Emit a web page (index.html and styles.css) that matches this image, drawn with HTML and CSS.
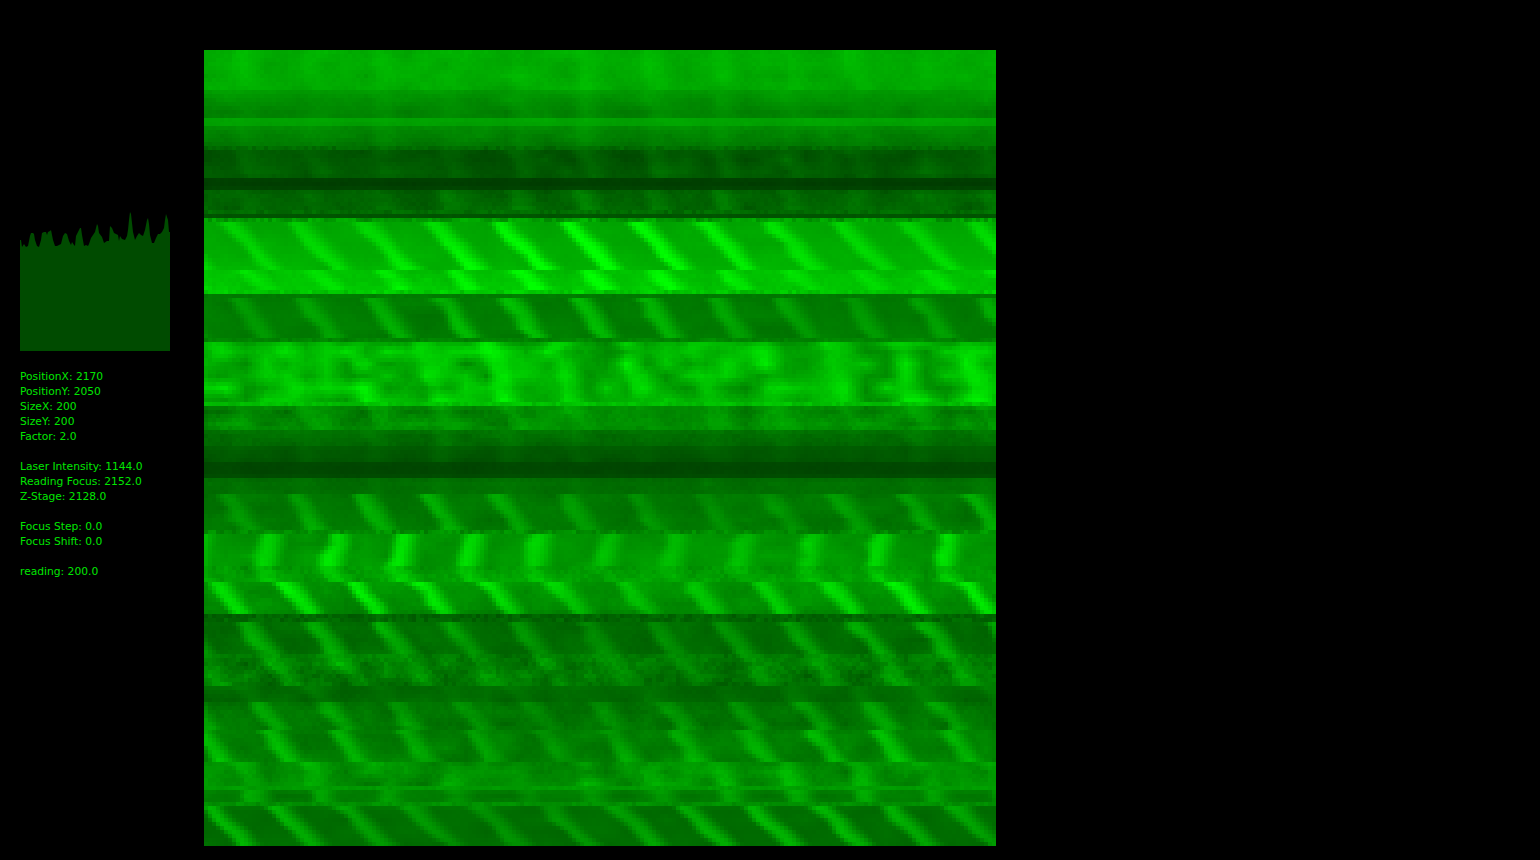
FILE: index.html
```html
<!DOCTYPE html>
<html lang="en">
<head>
    <meta charset="UTF-8">
    <title>Scan Viewer</title>
    <link rel="stylesheet" href="styles.css">
</head>
<body>
    <aside class="sidebar">
        <svg class="histogram" width="150" height="140" viewBox="20 212 150 140">
            <polygon fill="#004b00" points="20,351 20,240 21,240 22,247 24,244 26,247 28,246 30,236 31,233 33,233 34,234 35,240 37,246 39,247 41,240 42,233 44,232 46,232 47,235 48,232 50,231 51,230 53,240 55,246 57,246 59,245 61,244 63,236 65,233 67,234 69,241 71,245 72,242 74,245 75,246 76,236 78,232 80,228 81,228 82,235 84,246 86,245 88,246 89,244 91,238 93,235 95,232 97,224 98,226 99,233 102,237 104,243 107,241 109,241 110,226 112,228 114,233 118,235 119,241 120,236 122,239 125,240 127,236 128,230 129,220 130,212 131,214 133,232 135,240 137,236 139,233 141,235 143,236 145,230 147,220 148,218 149,224 150,235 152,243 154,243 156,238 158,234 160,234 162,232 164,228 165,220 166,214 168,220 169,232 170,232 170,351"/>
        </svg>

        <div class="readout">
            <div class="readout-group">
                <div>PositionX: 2170</div>
                <div>PositionY: 2050</div>
                <div>SizeX: 200</div>
                <div>SizeY: 200</div>
                <div>Factor: 2.0</div>
            </div>
            <div class="readout-group">
                <div>Laser Intensity: 1144.0</div>
                <div>Reading Focus: 2152.0</div>
                <div>Z-Stage: 2128.0</div>
            </div>
            <div class="readout-group">
                <div>Focus Step: 0.0</div>
                <div>Focus Shift: 0.0</div>
            </div>
            <div class="readout-group">
                <div>reading: 200.0</div>
            </div>
        </div>
    </aside>

    <canvas id="scan" class="scan" width="198" height="199"></canvas>

    <script src="app.js"></script>
</body>
</html>
```

FILE: styles.css
```css
html, body {
    margin: 0;
    padding: 0;
    height: 100%;
    background-color: #000;
    overflow: hidden;
}

body {
    display: flex;
    align-items: flex-start;
    padding-top: 50px;
    box-sizing: border-box;
    font-family: "DejaVu Sans", sans-serif;
}

.sidebar {
    width: 204px;
    flex-shrink: 0;
    padding: 162px 0 0 20px;
    box-sizing: border-box;
}

.histogram {
    display: block;
}

.readout {
    margin-top: 17px;
    color: #00e600;
    font-size: 10.7px;
    line-height: 15px;
    white-space: nowrap;
}

.readout-group {
    margin-bottom: 15px;
}

.scan {
    display: block;
    width: 792px;
    height: 796px;
    flex-shrink: 0;
    image-rendering: pixelated;
}
```

FILE: app.js
```js
// bands of the scan, in page pixels
// [top, bottom, green at top, green at bottom, streak amount, noise, slope, x of a streak at top, blob]
const bands = [
    [50, 90, 172, 168, 12, 6, 0.2, 240, 10],
    [90, 118, 150, 124, 8, 5, 0.2, 240, 8],
    [118, 126, 168, 160, 2, 4, 0, 240, 6],
    [126, 146, 138, 118, 8, 6, 0.2, 240, 10],
    [146, 150, 108, 115, 4, 20, 0, 240, 4],
    [150, 178, 84, 92, 18, 5, 0.4, 240, 12],
    [178, 190, 60, 64, 3, 3, 0, 240, 3],
    [190, 210, 98, 98, 24, 8, 0.4, 240, 12],
    [210, 214, 112, 86, 4, 22, 0, 240, 3],
    [214, 218, 70, 72, 1, 4, 0, 240, 3],
    [218, 222, 165, 170, 12, 44, 0, 240, 6],
    [222, 270, 165, 178, 78, 3, 0.95, 293, 6],
    [270, 290, 192, 198, 56, 8, 1, 245, 12],
    [290, 294, 208, 212, 10, 28, 0, 240, 6],
    [294, 298, 110, 108, 2, 8, 0, 240, 4],
    [298, 338, 122, 122, 62, 3, 0.7, 303, 8],
    [338, 342, 125, 200, 8, 16, 0, 240, 6],
    [342, 400, 178, 172, 34, 8, 0.3, 282, 40],
    [400, 404, 205, 195, 6, 26, 0, 240, 8],
    [404, 430, 125, 145, 24, 12, 0.5, 300, 22],
    [430, 444, 110, 102, 12, 8, 0.5, 300, 8],
    [444, 462, 90, 84, 8, 3, 0.2, 300, 6],
    [462, 478, 70, 72, 2, 3, 0, 300, 3],
    [478, 494, 110, 108, 8, 6, 0.2, 300, 6],
    [494, 530, 118, 118, 50, 5, 0.7, 222, 10],
    [530, 534, 140, 185, 8, 36, 0, 240, 6],
    [534, 566, 145, 150, 72, 4, -0.2, 265, 12],
    [566, 580, 150, 160, 40, 16, 0.6, 258, 14],
    [580, 614, 148, 135, 88, 8, 0.8, 212, 12],
    [614, 620, 95, 105, 6, 26, 0, 240, 4],
    [620, 652, 108, 105, 60, 5, 0.8, 240, 10],
    [652, 684, 125, 115, 36, 20, 0.7, 265, 22],
    [684, 702, 104, 102, 16, 5, 0.5, 240, 10],
    [702, 730, 112, 116, 46, 8, 0.8, 255, 12],
    [730, 762, 125, 125, 58, 6, 0.75, 265, 14],
    [762, 784, 140, 138, 30, 10, 0.4, 240, 24],
    [784, 788, 160, 160, 4, 10, 0, 240, 6],
    [788, 802, 122, 118, 42, 4, 0.1, 250, 10],
    [802, 806, 150, 140, 4, 18, 0, 240, 6],
    [806, 846, 108, 108, 68, 2, 1.05, 205, 6]
];

const cell = 4;
const left = 204;
const period = 68;

// small seeded generator, so each run draws the same picture
let seed = 48271;
function rand() {
    seed = (seed * 16807) % 2147483647;
    return seed / 2147483647;
}

// coarse grid of random values, read back with smoothing to get soft blobs
const blobW = 60;
const blobH = 80;
const blobs = [];
for (let i = 0; i < blobW * blobH; i++) {
    blobs.push(rand() * 2 - 1);
}

function blobAt(col, row) {
    const fx = col / 5;
    const fy = row / 3;
    const x0 = Math.floor(fx);
    const y0 = Math.floor(fy);
    const tx = fx - x0;
    const ty = fy - y0;
    const get = (x, y) => blobs[((y % blobH) * blobW + (x % blobW))];
    const a = get(x0, y0) * (1 - tx) + get(x0 + 1, y0) * tx;
    const b = get(x0, y0 + 1) * (1 - tx) + get(x0 + 1, y0 + 1) * tx;
    return a * (1 - ty) + b * ty;
}

function findBand(y) {
    return bands.find(band => y >= band[0] && y < band[1]) || bands[bands.length - 1];
}

// streak profile over one period: quick rise, slow fall
function streak(phase) {
    if (phase < 0.35) {
        const v = Math.cos(phase / 0.35 * Math.PI / 2);
        return v * v;
    }
    if (phase > 0.78) {
        const v = Math.sin((phase - 0.78) / 0.22 * Math.PI / 2);
        return v * v;
    }
    return 0;
}

function baseAt(row) {
    const y = 50 + row * cell;
    const band = findBand(y);
    return band[2] + (band[3] - band[2]) * (y - band[0]) / (band[1] - band[0]);
}

function drawScan() {
    const canvas = document.getElementById('scan');
    const ctx = canvas.getContext('2d');
    const image = ctx.createImageData(canvas.width, canvas.height);

    for (let row = 0; row < canvas.height; row++) {
        const y = 50 + row * cell;
        const [top, , , , amount, noise, slope, startX, blob] = findBand(y);
        const base = baseAt(row) * 0.8
            + (baseAt(Math.max(row - 1, 0)) + baseAt(Math.min(row + 1, canvas.height - 1))) * 0.1;

        for (let col = 0; col < canvas.width; col++) {
            const x = left + col * cell;
            const offset = x - startX - (y - top) * slope + blobAt(col, row) * 4;
            const phase = ((offset % period) + period) % period / period;
            const swell = 0.82 + 0.28 * Math.sin(x / 97 + y / 140);

            const green = base
                + streak(phase) * amount * swell
                + blobAt(col, row) * blob
                + (rand() - 0.5) * noise;

            const i = (row * canvas.width + col) * 4;
            image.data[i] = 0;
            image.data[i + 1] = Math.max(0, Math.min(255, Math.round(green)));
            image.data[i + 2] = 0;
            image.data[i + 3] = 255;
        }
    }

    ctx.putImageData(image, 0, 0);
}

drawScan();
```
